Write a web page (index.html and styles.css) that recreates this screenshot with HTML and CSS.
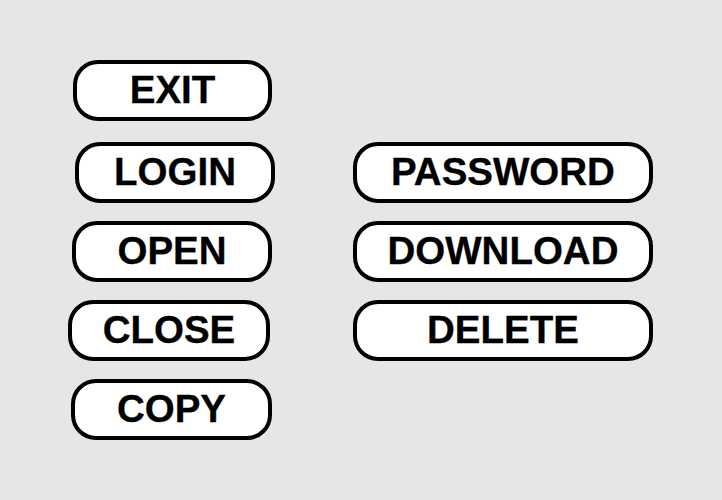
FILE: index.html
```html
<!DOCTYPE html>
<html>
<head>
<meta charset="utf-8">
<link rel="stylesheet" href="styles.css">
</head>
<body>
<div class="board">
  <div class="btn left r1 s-exit">EXIT</div>
  <div class="btn left r2 s-login">LOGIN</div>
  <div class="btn right r2">PASSWORD</div>
  <div class="btn left r3">OPEN</div>
  <div class="btn right r3">DOWNLOAD</div>
  <div class="btn left r4 s-close">CLOSE</div>
  <div class="btn right r4">DELETE</div>
  <div class="btn left r5 s-copy">COPY</div>
</div>
</body>
</html>
```

FILE: styles.css
```css
html, body {
  margin: 0;
  padding: 0;
  background: #e6e6e6;
}
body {
  width: 722px;
  height: 500px;
  overflow: hidden;
  font-family: "Liberation Sans", Arial, sans-serif;
}
.board {
  display: grid;
  grid-template-columns: 200px 300px;
  grid-template-rows: repeat(5, 61px);
  column-gap: 81px;
  row-gap: 18px;
  padding: 63px 0 0 72px;
}
.btn {
  box-sizing: border-box;
  height: 61px;
  border: 4px solid #000;
  border-radius: 25px;
  background: #fff;
  display: flex;
  align-items: center;
  justify-content: center;
  font-weight: bold;
  font-size: 38.5px;
  color: #000;
  padding-bottom: 2px;
  -webkit-text-stroke: 0.3px #000;
}
.left { grid-column: 1; }
.right { grid-column: 2; }
.r1 { grid-row: 1; margin-top: -3px; }
.r2 { grid-row: 2; }
.r3 { grid-row: 3; }
.r4 { grid-row: 4; }
.r5 { grid-row: 5; }
.s-exit { margin-left: 1px; }
.s-login { margin-left: 3px; margin-right: -3px; }
.s-close { margin-left: -4px; margin-right: 2px; }
.s-copy { margin-left: -1px; margin-right: 0; }
```
